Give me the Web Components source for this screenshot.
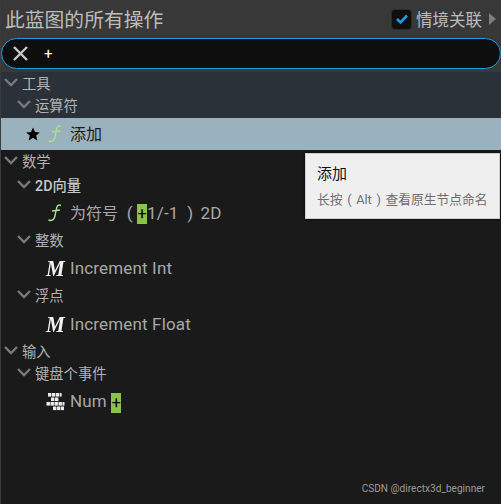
<!DOCTYPE html>
<html>
<head>
<title>Blueprint Actions</title>
<style>
    html, body { margin: 0; padding: 0; background: #1a1a1a; }
    body { width: 501px; height: 504px; overflow: hidden; font-family: Roboto, "Noto Sans CJK SC", sans-serif; }
    .latin { font-size: 17px; letter-spacing: 0.15px; }
</style>
</head>
<body>
<bp-panel>
    <bp-header></bp-header>
    <bp-search value="+"></bp-search>
    <bp-group active>
        <bp-row level="1">工具</bp-row>
        <bp-row level="2">运算符</bp-row>
    </bp-group>
    <bp-action selected icon="f" starred>添加</bp-action>
    <bp-row level="1">数学</bp-row>
    <bp-row level="2" strong style="margin-top:2px">2D向量</bp-row>
    <bp-action icon="f" style="margin-top:1px">为符号<span class="latin">&nbsp;&nbsp;(&nbsp;<mark-plus></mark-plus>1/-1&nbsp;&nbsp;)&thinsp;&thinsp;2D</span></bp-action>
    <bp-row level="2">整数</bp-row>
    <bp-action icon="m" latin style="margin-top:1px"><span class="latin">Increment Int</span></bp-action>
    <bp-row level="2">浮点</bp-row>
    <bp-action icon="m" latin style="margin-top:2px"><span class="latin">Increment Float</span></bp-action>
    <bp-row level="1">输入</bp-row>
    <bp-row level="2">键盘个事件</bp-row>
    <bp-action icon="key" latin style="margin-top:2px"><span class="latin">Num <mark-plus></mark-plus></span></bp-action>
    <bp-tooltip title="添加">长按 ( Alt ) 查看原生节点命名</bp-tooltip>
    <bp-mark>CSDN @directx3d_beginner</bp-mark>
</bp-panel>

<script>
    const chevron = '<svg width="16" height="10" viewBox="0 0 16 10"><path d="M2 2 L8 8 L14 2" fill="none" stroke="#7a7a7a" stroke-width="2.4"/></svg>';

    const icons = {
        f: '<svg width="16" height="20" viewBox="0 0 16 20"><path d="M14 2.5 C11 1 10 3 9.4 6 L7.8 13.5 C7.2 16.6 5 18.4 1.5 17 M5 8 L13 7" fill="none" stroke="#a6e08f" stroke-width="1.4"/></svg>',
        m: '<span class="m">M</span>',
        key: '<svg class="key" width="20" height="20" viewBox="0 0 20 20" fill="#ececec">' +
            '<rect x="2" y="1" width="3.4" height="3.6"/><rect x="6" y="1" width="3.4" height="3.6"/><rect x="10" y="1" width="3.4" height="3.6"/><rect x="14" y="1" width="1.6" height="3.6"/>' +
            '<rect x="5" y="5.5" width="3.4" height="3.6"/><rect x="9" y="5.5" width="3.4" height="3.6"/>' +
            '<rect x="0.5" y="10" width="3.4" height="3.6"/><rect x="4.5" y="10" width="3.4" height="3.6"/><rect x="8.5" y="10" width="3.4" height="3.6"/><rect x="12.5" y="10" width="3.4" height="3.6"/><rect x="16.5" y="10" width="2" height="3.6"/>' +
            '<rect x="7" y="14.5" width="3.4" height="3.6"/><rect x="11" y="14.5" width="3.4" height="3.6"/><rect x="15" y="14.5" width="3" height="3.6"/></svg>'
    };

    class BpPanel extends HTMLElement {
        constructor() {
            super();
            this.attachShadow({ mode: 'open' });
            this.shadowRoot.innerHTML = `
            <style>
                :host { display: flex; flex-direction: column; position: relative; width: 501px; height: 504px; box-sizing: border-box; border-left: 1px solid #3c3c3c; background: #1a1a1a; overflow: hidden; }
            </style>
            <slot></slot>`;
        }
    }

    class BpHeader extends HTMLElement {
        constructor() {
            super();
            this.attachShadow({ mode: 'open' });
            this.shadowRoot.innerHTML = `
            <style>
                :host { display: flex; align-items: center; height: 38px; box-sizing: border-box; padding: 3px 5px 0 5px; margin-left: -1px; background: #383838; color: #bcbcbc; font-family: Roboto, "Noto Sans CJK SC", sans-serif; }
                .title { flex: 1; font-size: 19.8px; line-height: 35px; }
                .box { width: 21px; height: 21px; margin-top: -3px; box-sizing: border-box; border-radius: 4px; background: #0f0f0f; border: 1px solid #2b2b2b; display: flex; align-items: center; justify-content: center; }
                .label { font-size: 16.5px; margin: -3px 7px 0 4px; }
                .arrow { width: 0; height: 0; margin-top: -3px; border-left: 7px solid #7d7d7d; border-top: 6px solid transparent; border-bottom: 6px solid transparent; }
            </style>
            <div class="title">此蓝图的所有操作</div>
            <div class="box"><svg width="14" height="12" viewBox="0 0 14 12"><path d="M2 6 L5.5 9.5 L12 2.5" fill="none" stroke="#1d9ae0" stroke-width="2.6"/></svg></div>
            <div class="label">情境关联</div>
            <div class="arrow"></div>`;
        }
    }

    class BpSearch extends HTMLElement {
        constructor() {
            super();
            this.attachShadow({ mode: 'open' });
            this.shadowRoot.innerHTML = `
            <style>
                :host { display: block; background: #383838; padding: 0 0 3px 0; margin-left: -1px; }
                .field { display: flex; align-items: center; height: 31px; box-sizing: border-box; margin: 0 0 0 1px; border: 1px solid #1b9ee3; border-radius: 15.5px; background: #0e0e0e; padding-left: 10px; }
                svg { display: block; }
                .text { margin-left: 15px; color: #fff; font-size: 15px; font-family: Roboto, sans-serif; }
            </style>
            <div class="field">
                <svg width="17" height="17" viewBox="0 0 17 17"><path d="M2 2 L15 15 M15 2 L2 15" stroke="#c8c8c8" stroke-width="2.4"/></svg>
                <span class="text">${this.getAttribute('value')}</span>
            </div>`;
        }
    }

    class BpGroup extends HTMLElement {
        constructor() {
            super();
            this.attachShadow({ mode: 'open' });
            this.shadowRoot.innerHTML = `
            <style>
                :host { display: block; height: 46px; background: #2b3139; }
            </style>
            <slot></slot>`;
        }
    }

    class BpRow extends HTMLElement {
        constructor() {
            super();
            this.attachShadow({ mode: 'open' });
            const indent = this.getAttribute('level') === '2' ? 15 : 2;
            const strong = this.hasAttribute('strong');
            this.shadowRoot.innerHTML = `
            <style>
                :host { display: flex; align-items: center; height: 22px; box-sizing: border-box; padding: 0 0 2px ${indent}px; color: ${strong ? '#c8c8c8' : '#b4b4b4'}; font-size: 14.3px; font-weight: ${strong ? 500 : 400}; font-family: Roboto, "Noto Sans CJK SC", sans-serif; }
                svg { display: block; margin-right: 3px; }
            </style>
            ${chevron}<slot></slot>`;
        }
    }

    class BpAction extends HTMLElement {
        constructor() {
            super();
            this.attachShadow({ mode: 'open' });
            const selected = this.hasAttribute('selected');
            const icon = this.getAttribute('icon');
            this.shadowRoot.innerHTML = `
            <style>
                :host { display: flex; align-items: center; height: 32px; padding-left: 25px; background: ${selected ? '#9ab2be' : 'transparent'}; color: ${selected ? '#1c1c1c' : '#a8a8a8'}; font-size: 16px; font-family: Roboto, "Noto Sans CJK SC", sans-serif; }
                svg.star { display: block; }
                .slot { width: 14px; }
                .icon { width: 23px; margin-left: 7px; display: flex; align-items: center; justify-content: flex-start; }
                .m { display: block; font: italic bold 24px/24px "Liberation Serif", serif; color: #f2f2f2; margin-left: -1px; transform: scaleX(0.88); transform-origin: left center; }
                .key { margin-left: -1px; flex: none; filter: blur(0.3px); }
                .label { display: block; white-space: nowrap; margin-top: ${this.hasAttribute('latin') ? 0 : -2}px; }
            </style>
            ${this.hasAttribute('starred') ? '<svg class="star" width="14" height="14" viewBox="0 0 14 14"><path d="M7 0.5 L9 5 L13.8 5.4 L10.2 8.6 L11.3 13.4 L7 10.8 L2.7 13.4 L3.8 8.6 L0.2 5.4 L5 5 Z" fill="#000"/></svg>' : '<span class="slot"></span>'}
            <span class="icon">${icons[icon]}</span><span class="label"><slot></slot></span>`;
        }
    }

    class MarkPlus extends HTMLElement {
        constructor() {
            super();
            this.attachShadow({ mode: 'open' });
            this.shadowRoot.innerHTML = `
            <style>
                :host { display: inline-block; width: 10px; height: 20px; line-height: 20px; vertical-align: middle; text-align: center; background: #8bc34a; color: #000; font-size: 16px; letter-spacing: 0; }
            </style>+`;
        }
    }

    class BpTooltip extends HTMLElement {
        constructor() {
            super();
            this.attachShadow({ mode: 'open' });
            this.shadowRoot.innerHTML = `
            <style>
                :host { position: absolute; left: 304px; top: 153px; width: 195px; height: 66px; box-sizing: border-box; padding: 10px 0 0 11px; background: #efefef; border: 1px solid #cfcfcf; box-shadow: 0 0 2px #000; font-family: Roboto, "Noto Sans CJK SC", sans-serif; }
                .title { color: #111; font-size: 15px; line-height: 20px; }
                .body { color: #6e6e6e; font-size: 12.75px; line-height: 18px; margin-top: 7px; white-space: nowrap; word-spacing: 1.5px; }
            </style>
            <div class="title">${this.getAttribute('title')}</div>
            <div class="body"><slot></slot></div>`;
        }
    }

    class BpMark extends HTMLElement {
        constructor() {
            super();
            this.attachShadow({ mode: 'open' });
            this.shadowRoot.innerHTML = `
            <style>
                :host { position: absolute; right: 16px; top: 482px; color: #9a9a9a; font-size: 10.1px; line-height: 14px; font-family: Roboto, sans-serif; }
            </style>
            <slot></slot>`;
        }
    }

    customElements.define('bp-panel', BpPanel);
    customElements.define('bp-header', BpHeader);
    customElements.define('bp-search', BpSearch);
    customElements.define('bp-group', BpGroup);
    customElements.define('bp-row', BpRow);
    customElements.define('bp-action', BpAction);
    customElements.define('mark-plus', MarkPlus);
    customElements.define('bp-tooltip', BpTooltip);
    customElements.define('bp-mark', BpMark);
</script>
</body>
</html>
